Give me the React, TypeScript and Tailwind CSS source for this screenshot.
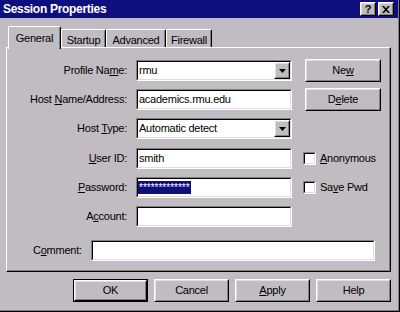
import React from 'react';

const U: React.FC<{ children: React.ReactNode }> = ({ children }) => (
  <span className="underline decoration-1 underline-offset-[1px]">{children}</span>
);

const Sunken: React.FC<{ className?: string; children?: React.ReactNode }> = ({ className = '', children }) => (
  <div className={`border border-t-[#808080] border-l-[#808080] border-r-white border-b-white ${className}`}>
    <div className="flex h-full w-full items-center border border-t-black border-l-black border-r-[#dfdfdf] border-b-[#dfdfdf] bg-white">
      {children}
    </div>
  </div>
);

const Raised: React.FC<{ className?: string; children?: React.ReactNode }> = ({ className = '', children }) => (
  <div className={`border border-t-white border-l-white border-r-black border-b-black bg-[#c0bcc2] ${className}`}>
    <div className="flex h-full w-full items-center justify-center border border-t-[#dfdfdf] border-l-[#dfdfdf] border-r-[#808080] border-b-[#808080]">
      {children}
    </div>
  </div>
);

const Arrow = () => (
  <svg width="7" height="4" viewBox="0 0 7 4">
    <path d="M0 0h7L3.5 4z" fill="#000" />
  </svg>
);

const Combo: React.FC<{ value: string }> = ({ value }) => (
  <Sunken className="h-[21px] w-[156px]">
    <span className="flex-1 pl-[1px]">{value}</span>
    <Raised className="h-[17px] w-[16px]">
      <Arrow />
    </Raised>
  </Sunken>
);

const Field: React.FC<{ value?: string; className?: string }> = ({ value = '', className = 'w-[156px]' }) => (
  <Sunken className={`h-[21px] ${className}`}>
    <span className="pl-[1px]">{value}</span>
  </Sunken>
);

const Check: React.FC<{ children: React.ReactNode }> = ({ children }) => (
  <div className="ml-[11px] flex items-center">
    <Sunken className="h-[13px] w-[13px]" />
    <span className="ml-[4px]">{children}</span>
  </div>
);

const tab =
  'flex justify-center rounded-tl-[2px] rounded-tr-[2px] border-l border-t border-r border-l-white border-t-white border-r-black shadow-[inset_-1px_0_0_#808080]';

export default function App() {
  return (
    <div className="flex h-[312px] w-[400px] flex-col border-r border-b border-r-black border-b-black bg-[#c0bcc2] font-['Liberation_Sans',Arial,sans-serif] text-[11px] leading-[13px] tracking-[-0.25px] text-black shadow-[inset_-1px_-1px_0_#808080]">
      {/* title bar */}
      <div className="mr-[1px] flex h-[18px] items-center bg-[#0e0e7e] pl-[3px] pr-[4px]">
        <span className="flex-1 text-[12px] font-bold tracking-[-0.3px] text-white">Session Properties</span>
        <Raised className="h-[14px] w-[16px]">
          <span className="text-[11px] font-bold leading-[10px]">?</span>
        </Raised>
        <Raised className="ml-[2px] h-[14px] w-[16px]">
          <svg width="8" height="7" viewBox="0 0 8 7">
            <path d="M0 0h2l2 2.2L6 0h2L5 3.5 8 7H6L4 4.8 2 7H0l3-3.5z" fill="#000" />
          </svg>
        </Raised>
      </div>

      {/* tabs */}
      <div className="ml-[8px] mt-[8px] flex h-[21px] items-end">
        <div className={`${tab} relative z-10 -mb-[2px] h-[23px] w-[53px] bg-[#c0bcc2] pt-[5px]`}>General</div>
        <div className={`${tab} h-[18px] w-[45px] pt-[4px]`}>Startup</div>
        <div className={`${tab} h-[18px] w-[60px] pt-[4px]`}>Advanced</div>
        <div className={`${tab} h-[18px] w-[46px] pt-[4px]`}>Firewall</div>
      </div>

      {/* panel */}
      <div className="ml-[6px] mr-[8px] flex h-[225px] flex-col border border-t-white border-l-white border-r-black border-b-black pt-[12px] shadow-[inset_-1px_-1px_0_#808080]">
        <div className="flex h-[21px] items-center">
          <div className="w-[120px] text-right">
            Profile Na<U>m</U>e:
          </div>
          <div className="ml-[9px]">
            <Combo value="rmu" />
          </div>
          <Raised className="ml-[13px] h-[23px] w-[76px]">
            <span>
              Ne<U>w</U>
            </span>
          </Raised>
        </div>

        <div className="mt-[8px] flex h-[21px] items-center">
          <div className="w-[120px] text-right">
            Host <U>N</U>ame/Address:
          </div>
          <div className="ml-[9px]">
            <Field value="academics.rmu.edu" />
          </div>
          <Raised className="ml-[13px] h-[23px] w-[76px]">
            <span>
              D<U>e</U>lete
            </span>
          </Raised>
        </div>

        <div className="mt-[8px] flex h-[21px] items-center">
          <div className="w-[120px] text-right">
            Host <U>T</U>ype:
          </div>
          <div className="ml-[9px]">
            <Combo value="Automatic detect" />
          </div>
        </div>

        <div className="mt-[9px] flex h-[21px] items-center">
          <div className="w-[120px] text-right">
            <U>U</U>ser ID:
          </div>
          <div className="ml-[9px]">
            <Field value="smith" />
          </div>
          <Check>
            <U>A</U>nonymous
          </Check>
        </div>

        <div className="mt-[8px] flex h-[21px] items-center">
          <div className="w-[120px] text-right">
            <U>P</U>assword:
          </div>
          <div className="ml-[9px]">
            <Sunken className="h-[21px] w-[156px]">
              <span className="h-[13px] bg-[#0e0e7e] px-[1px] text-[10px] tracking-[0px] text-white">*************</span>
            </Sunken>
          </div>
          <Check>
            Sa<U>v</U>e Pwd
          </Check>
        </div>

        <div className="mt-[8px] flex h-[21px] items-center">
          <div className="w-[120px] text-right">
            A<U>c</U>count:
          </div>
          <div className="ml-[9px]">
            <Field />
          </div>
        </div>

        <div className="mt-[13px] flex h-[21px] items-center pr-[15px]">
          <div className="w-[84px] pl-[26px]">
            C<U>o</U>mment:
          </div>
          <Field className="flex-1" />
        </div>
      </div>

      {/* bottom buttons */}
      <div className="mr-[8px] mt-[7px] flex justify-end gap-[6px]">
        <div className="border border-black">
          <Raised className="h-[21px] w-[73px]">
            <span>OK</span>
          </Raised>
        </div>
        <Raised className="h-[23px] w-[75px]">
          <span>Cancel</span>
        </Raised>
        <Raised className="h-[23px] w-[75px]">
          <span>
            <U>A</U>pply
          </span>
        </Raised>
        <Raised className="h-[23px] w-[75px]">
          <span>Help</span>
        </Raised>
      </div>
    </div>
  );
}
